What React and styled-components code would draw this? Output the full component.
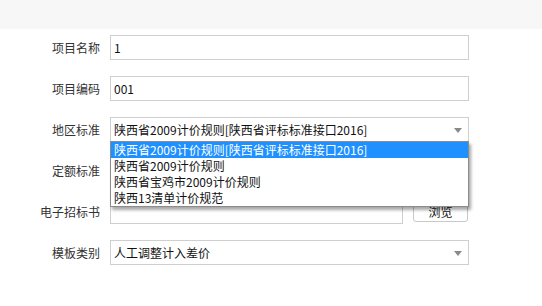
import React from "react";
import styled, { createGlobalStyle } from "styled-components";

const GlobalStyle = createGlobalStyle`
  body {
    margin: 0;
    background: #ffffff;
    font-family: "Noto Sans CJK SC", "Noto Sans", sans-serif;
    font-size: 12px;
  }
`;

const TopBar = styled.div`
  height: 29px;
  background: #f7f7f7;
`;

const Form = styled.div`
  display: flex;
  flex-direction: column;
  gap: 16px;
  padding-top: 6px;
`;

const Row = styled.div`
  display: flex;
  align-items: center;
  height: 25px;
`;

const Label = styled.div`
  width: 100px;
  padding-right: 10px;
  text-align: right;
  color: #333;
  font-size: 12px;
`;

const Field = styled.div`
  position: relative;
  box-sizing: border-box;
  width: ${(p) => p.width || 359}px;
  height: 25px;
  border: 1px solid #cfcfcf;
  padding: 0 0 0 3px;
  display: flex;
  align-items: center;
  color: #111;
  font-size: 12px;
  white-space: nowrap;
`;

const Arrow = styled.span`
  position: absolute;
  right: 6px;
  top: 10px;
  width: 0;
  height: 0;
  border-left: 4px solid transparent;
  border-right: 4px solid transparent;
  border-top: 5px solid #8a8a8a;
`;

const Button = styled.button`
  box-sizing: border-box;
  margin-left: 10px;
  width: 55px;
  height: 20px;
  border: 1px solid #c8c8c8;
  border-radius: 3px;
  background: #fff;
  color: #111;
  font-family: inherit;
  font-size: 12px;
  padding: 0;
`;

const DropList = styled.ul`
  position: absolute;
  left: -1px;
  top: 23px;
  width: 359px;
  box-sizing: border-box;
  margin: 0;
  padding: 0;
  list-style: none;
  background: #fff;
  border: 1px solid #8c8c8c;
  box-shadow: 2px 3px 3px rgba(0, 0, 0, 0.35);
  z-index: 5;
`;

const Option = styled.li`
  height: 16px;
  line-height: 16px;
  padding-left: 3px;
  font-size: 12px;
  color: ${(p) => (p.active ? "#fff" : "#111")};
  background: ${(p) => (p.active ? "#1e90ff" : "transparent")};
`;

const options = [
  "陕西省2009计价规则[陕西省评标标准接口2016]",
  "陕西省2009计价规则",
  "陕西省宝鸡市2009计价规则",
  "陕西13清单计价规范",
];

export default function App() {
  return (
    <>
      <GlobalStyle />
      <TopBar />
      <Form>
        <Row>
          <Label>项目名称</Label>
          <Field>1</Field>
        </Row>
        <Row>
          <Label>项目编码</Label>
          <Field>001</Field>
        </Row>
        <Row>
          <Label>地区标准</Label>
          <Field>
            陕西省2009计价规则[陕西省评标标准接口2016]
            <Arrow />
            <DropList>
              {options.map((o, i) => (
                <Option key={o} active={i === 0}>
                  {o}
                </Option>
              ))}
            </DropList>
          </Field>
        </Row>
        <Row>
          <Label>定额标准</Label>
          <Field />
        </Row>
        <Row>
          <Label>电子招标书</Label>
          <Field width={293} />
          <Button>浏览</Button>
        </Row>
        <Row>
          <Label>模板类别</Label>
          <Field>
            人工调整计入差价
            <Arrow />
          </Field>
        </Row>
      </Form>
    </>
  );
}
